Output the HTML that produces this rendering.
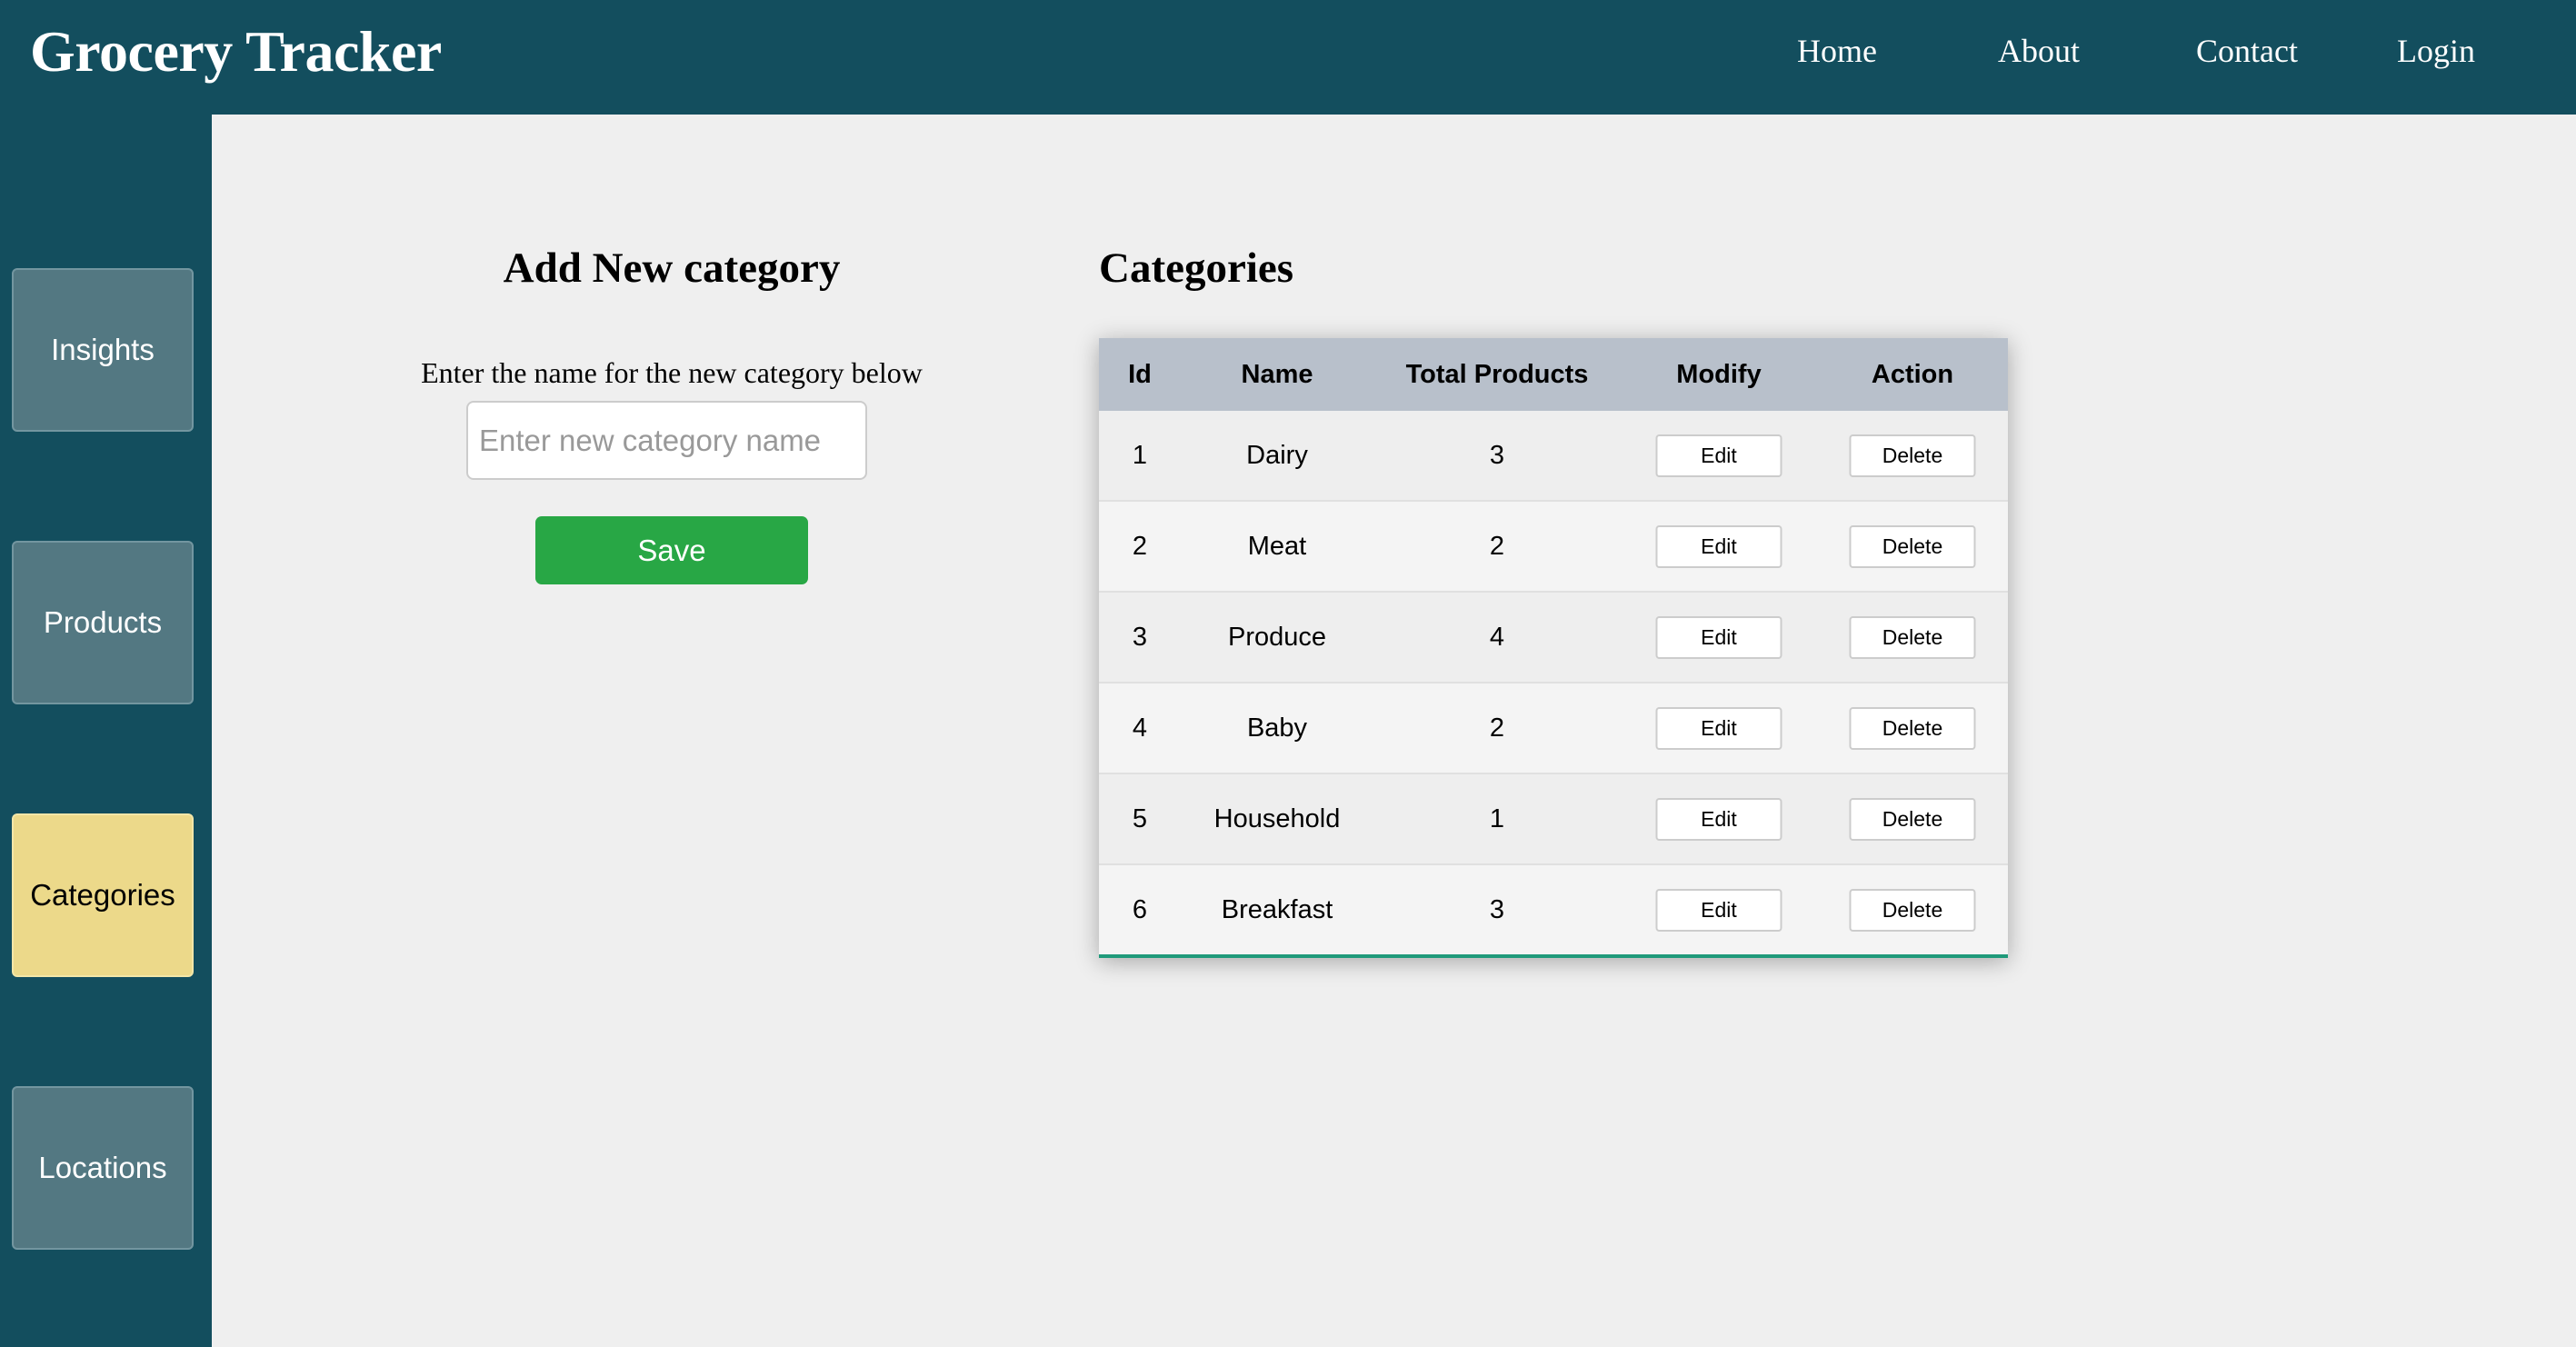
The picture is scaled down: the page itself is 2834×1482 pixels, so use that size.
<!DOCTYPE html>
<html><head><meta charset="utf-8"><style>
*{box-sizing:border-box;margin:0;padding:0}
body{width:2834px;height:1482px;background:#efefef;position:relative;overflow:hidden;font-family:"Liberation Sans",sans-serif}
.hdr{position:absolute;left:0;top:0;width:2834px;height:126px;background:#134e5e}
.title{position:absolute;left:33px;top:20px;font:bold 64px "Liberation Serif",serif;color:#fff;letter-spacing:-0.5px}
.nav{position:absolute;top:35px;font:36px "Liberation Serif",serif;color:#fff}
.side{position:absolute;left:0;top:126px;width:233px;height:1356px;background:#134e5e}
.sb{position:absolute;left:13px;width:200px;height:180px;background:#537882;border:2px solid #7396a0;border-radius:6px;color:#fff;font-size:33px;display:flex;align-items:center;justify-content:center}
.h2{position:absolute;font:bold 47px "Liberation Serif",serif;color:#000}
.lbl{position:absolute;left:439px;width:600px;text-align:center;top:392px;font:32px "Liberation Serif",serif}
.inp{position:absolute;left:513px;top:441px;width:441px;height:87px;background:#fff;border:2px solid #ccc;border-radius:8px;color:#999;font-size:33px;padding-left:12px;line-height:83px}
.save{position:absolute;left:589px;top:568px;width:300px;height:75px;background:#28a745;border-radius:7px;color:#fff;font-size:33px;text-align:center;line-height:75px}
.tbl{position:absolute;left:1209px;top:372px;width:1000px;height:682px;box-shadow:0 4px 24px rgba(0,0,0,.3)}
.row{position:absolute;left:0;width:1000px;height:100px;border-bottom:2px solid #e0e0e0}
.c{position:absolute;top:0;height:100%;display:flex;align-items:center;justify-content:center;font-size:29px;color:#000;transform:translateX(-50%);white-space:nowrap}
.btn{width:139px;height:47px;background:#fff;border:2px solid #ccc;border-radius:4px;font-size:23px;display:flex;align-items:center;justify-content:center}
</style></head><body>
<div class="hdr"><div class="title">Grocery Tracker</div>
<div class="nav" style="left:1977px">Home</div><div class="nav" style="left:2198px">About</div><div class="nav" style="left:2416px">Contact</div><div class="nav" style="left:2637px">Login</div></div>
<div class="side"></div>
<div class="sb" style="top:295px">Insights</div>
<div class="sb" style="top:595px">Products</div>
<div class="sb" style="top:895px;background:#ecd98a;border-color:#f3e6a8;color:#000">Categories</div>
<div class="sb" style="top:1195px">Locations</div>
<div class="h2" style="left:439px;width:600px;text-align:center;top:268px">Add New category</div>
<div class="lbl">Enter the name for the new category below</div>
<div class="inp">Enter new category name</div>
<div class="save">Save</div>
<div class="h2" style="left:1209px;top:268px">Categories</div>
<div class="tbl">
<div class="row" style="top:0;height:80px;background:#b8c0cb;border:none">
<div class="c" style="left:45px;font-weight:bold">Id</div><div class="c" style="left:196px;font-weight:bold">Name</div><div class="c" style="left:438px;font-weight:bold">Total Products</div><div class="c" style="left:682px;font-weight:bold">Modify</div><div class="c" style="left:895px;font-weight:bold">Action</div></div>
<div class="row" style="top:80px;background:#eeeeee"><div class="c" style="left:45px">1</div><div class="c" style="left:196px">Dairy</div><div class="c" style="left:438px">3</div><div class="c" style="left:682px"><div class="btn">Edit</div></div><div class="c" style="left:895px"><div class="btn">Delete</div></div></div>
<div class="row" style="top:180px;background:#f4f4f4"><div class="c" style="left:45px">2</div><div class="c" style="left:196px">Meat</div><div class="c" style="left:438px">2</div><div class="c" style="left:682px"><div class="btn">Edit</div></div><div class="c" style="left:895px"><div class="btn">Delete</div></div></div>
<div class="row" style="top:280px;background:#eeeeee"><div class="c" style="left:45px">3</div><div class="c" style="left:196px">Produce</div><div class="c" style="left:438px">4</div><div class="c" style="left:682px"><div class="btn">Edit</div></div><div class="c" style="left:895px"><div class="btn">Delete</div></div></div>
<div class="row" style="top:380px;background:#f4f4f4"><div class="c" style="left:45px">4</div><div class="c" style="left:196px">Baby</div><div class="c" style="left:438px">2</div><div class="c" style="left:682px"><div class="btn">Edit</div></div><div class="c" style="left:895px"><div class="btn">Delete</div></div></div>
<div class="row" style="top:480px;background:#eeeeee"><div class="c" style="left:45px">5</div><div class="c" style="left:196px">Household</div><div class="c" style="left:438px">1</div><div class="c" style="left:682px"><div class="btn">Edit</div></div><div class="c" style="left:895px"><div class="btn">Delete</div></div></div>
<div class="row" style="top:580px;height:102px;background:#f4f4f4;border-bottom:4px solid #1f9a7a"><div class="c" style="left:45px">6</div><div class="c" style="left:196px">Breakfast</div><div class="c" style="left:438px">3</div><div class="c" style="left:682px"><div class="btn">Edit</div></div><div class="c" style="left:895px"><div class="btn">Delete</div></div></div>
</div>
</body></html>
